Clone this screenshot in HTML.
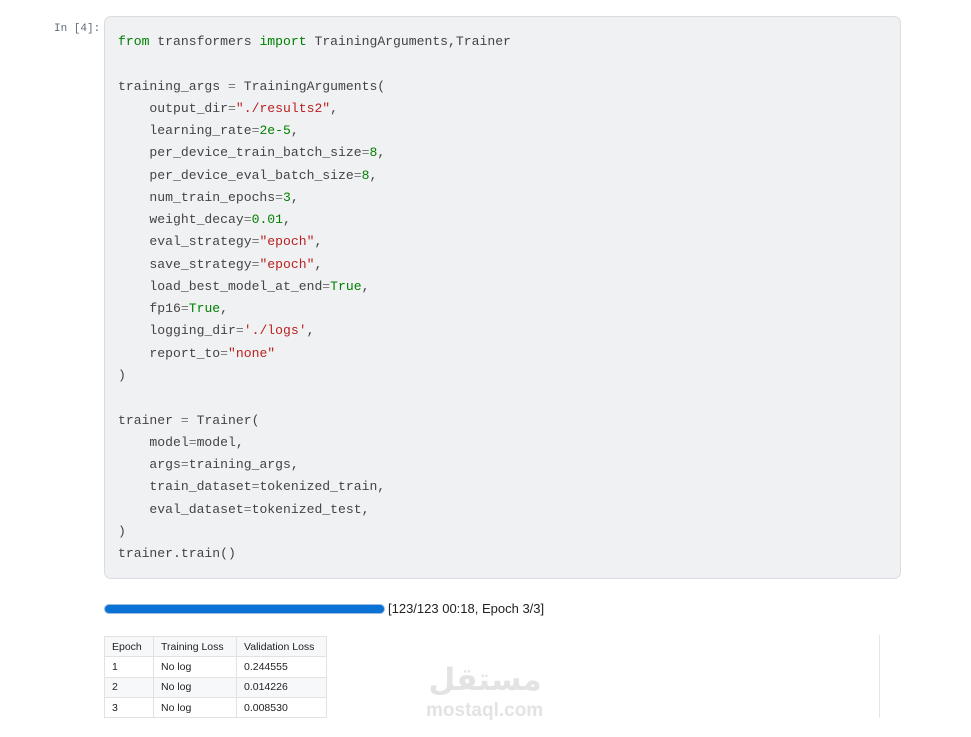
<!DOCTYPE html>
<html><head><meta charset="utf-8"><style>
body{margin:0;background:#fff;width:971px;height:737px;position:relative;overflow:hidden;font-family:"Liberation Sans",sans-serif}
.prompt{position:absolute;left:54px;top:23px;font:11px "Liberation Mono",monospace;color:#5f6b7a}
.cell{position:absolute;left:104px;top:16px;width:797px;height:563px;background:#f0f1f3;border:1px solid #d9dce0;border-radius:7px;box-sizing:border-box}
pre{position:absolute;left:118px;top:31px;margin:0;font:13.1px/22.27px "Liberation Mono",monospace;color:#444}
.k{color:#008000}.s{color:#ba2121}.n{color:#008000}.o{color:#777}
.bar{position:absolute;left:104px;top:604px;width:281px;height:10px;border-radius:5px;background:#0a72d4;border:1px solid #9bbbe0;box-sizing:border-box}
.lbl{position:absolute;left:388px;top:601px;font-size:13px;color:#222}
table{position:absolute;left:104px;top:636px;border-collapse:collapse;font-size:10.5px;color:#222;white-space:nowrap}
td{border:1px solid #e2e2e2;padding:0 7px;height:19.3px}
tr:nth-child(odd) td{background:#f7f8fa}
tr:nth-child(2) td{background:#fff}
.vl{position:absolute;left:879px;top:635px;width:1px;height:83px;background:#e6e6e6}
.wm{position:absolute;left:424px;top:660px;color:#e3e3e3;font-weight:bold;font-size:31px;line-height:40px;font-family:"DejaVu Sans",sans-serif;width:122px;text-align:center}
.wm2{position:absolute;left:426px;top:699px;color:#e3e3e3;font-weight:bold;font-size:19px;line-height:24px}
</style></head><body>
<div class="prompt">In [4]:</div>
<div class="cell"></div>
<pre><span class="k">from</span> transformers <span class="k">import</span> TrainingArguments,Trainer

training_args <span class="o">=</span> TrainingArguments(
    output_dir<span class="o">=</span><span class="s">"./results2"</span>,
    learning_rate<span class="o">=</span><span class="n">2e-5</span>,
    per_device_train_batch_size<span class="o">=</span><span class="n">8</span>,
    per_device_eval_batch_size<span class="o">=</span><span class="n">8</span>,
    num_train_epochs<span class="o">=</span><span class="n">3</span>,
    weight_decay<span class="o">=</span><span class="n">0.01</span>,
    eval_strategy<span class="o">=</span><span class="s">"epoch"</span>,
    save_strategy<span class="o">=</span><span class="s">"epoch"</span>,
    load_best_model_at_end<span class="o">=</span><span class="k">True</span>,
    fp16<span class="o">=</span><span class="k">True</span>,
    logging_dir<span class="o">=</span><span class="s">'./logs'</span>,
    report_to<span class="o">=</span><span class="s">"none"</span>
)

trainer <span class="o">=</span> Trainer(
    model<span class="o">=</span>model,
    args<span class="o">=</span>training_args,
    train_dataset<span class="o">=</span>tokenized_train,
    eval_dataset<span class="o">=</span>tokenized_test,
)
trainer.train()</pre>
<div class="bar"></div>
<div class="lbl">[123/123 00:18, Epoch 3/3]</div>
<table>
<tr><td style="width:34px">Epoch</td><td style="width:68px">Training Loss</td><td style="width:75px">Validation Loss</td></tr>
<tr><td>1</td><td>No log</td><td>0.244555</td></tr>
<tr><td>2</td><td>No log</td><td>0.014226</td></tr>
<tr><td>3</td><td>No log</td><td>0.008530</td></tr>
</table>
<div class="vl"></div>
<div class="wm">مستقل</div>
<div class="wm2">mostaql.com</div>
</body></html>
